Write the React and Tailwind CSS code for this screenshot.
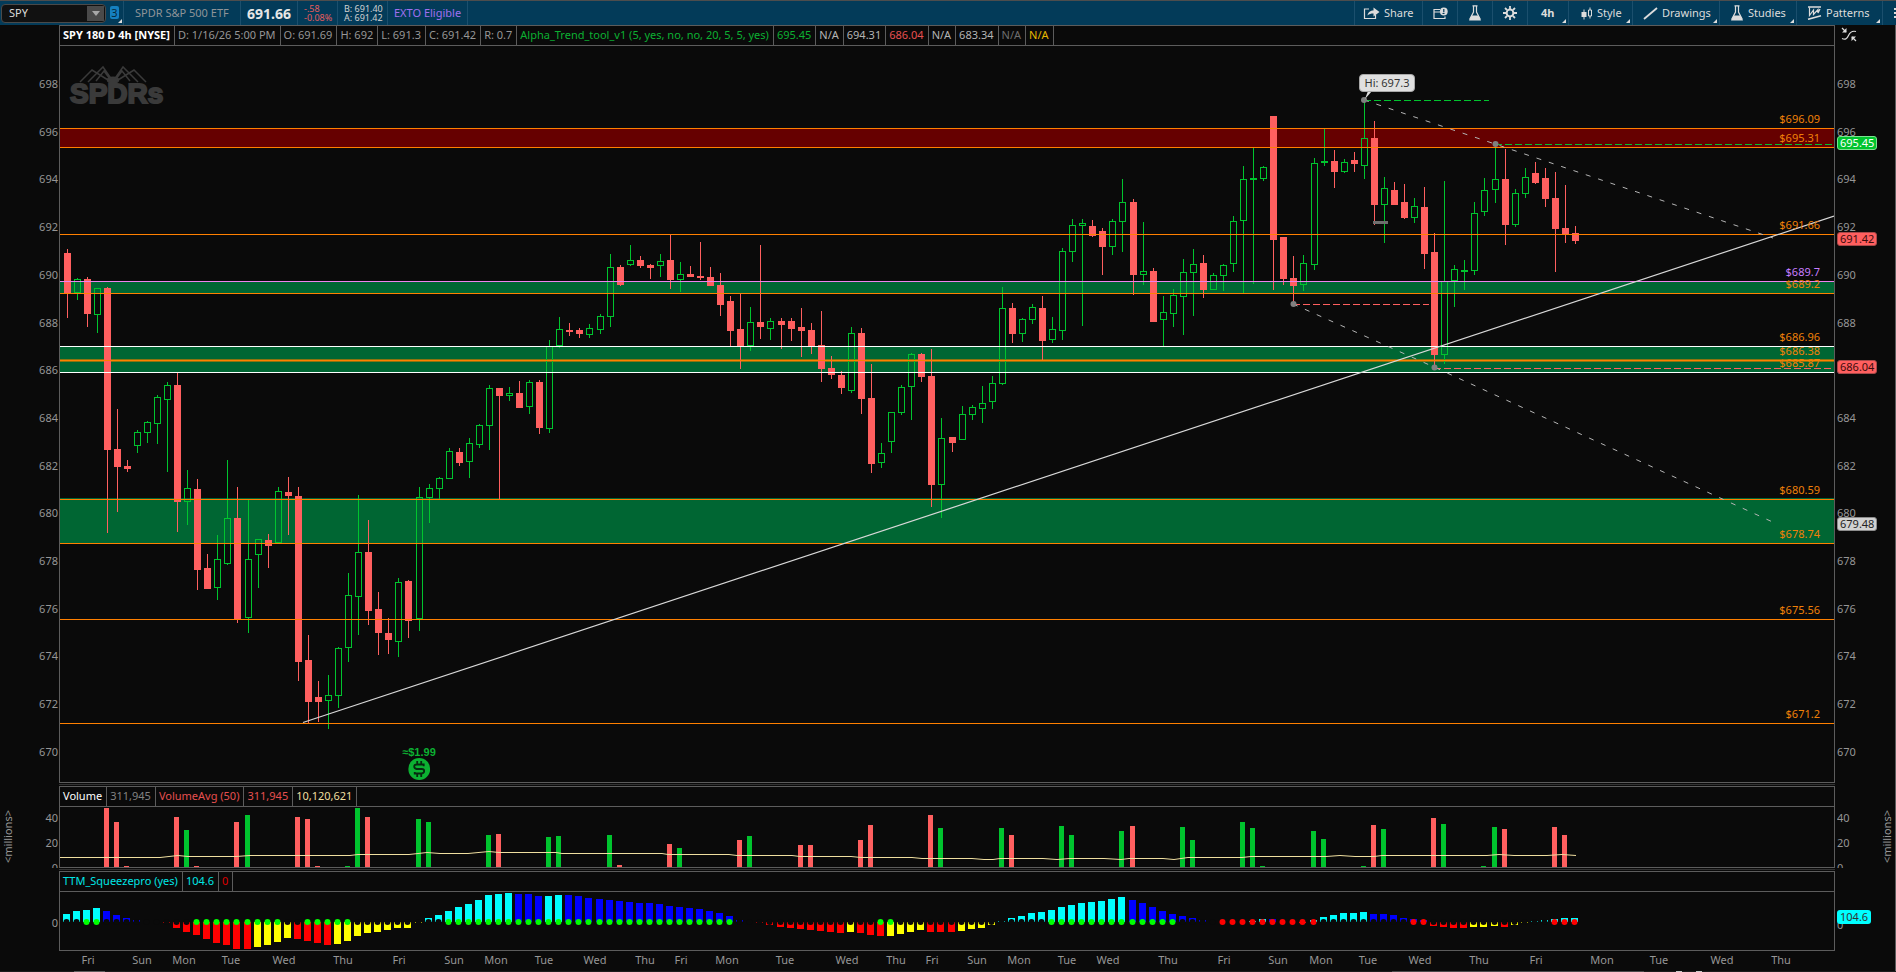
import React from 'react';

const UP = '#00c42e';
const DOWN = '#ff5f5f';

// Plot geometry
const LEFT = 60;
const WIDTH = 1774;
const barX = (i) => Math.floor(67.03 + i * 10.0565);

// [direction, high, body top, body bottom, low]
const candles = [
  ['d', 249, 253, 293, 318], ['u', 278, 279, 293, 300], ['d', 277, 279, 314, 327], ['u', 288, 288, 315, 333],
  ['d', 287, 288, 450, 533], ['d', 409, 449, 467, 512], ['d', 460, 466, 469, 472], ['u', 430, 432, 446, 453],
  ['u', 421, 422, 433, 443], ['u', 395, 397, 424, 444], ['u', 382, 385, 400, 472], ['d', 372, 385, 502, 532],
  ['u', 470, 488, 502, 525], ['d', 479, 489, 570, 590], ['d', 554, 568, 589, 589], ['u', 535, 559, 588, 600],
  ['u', 460, 518, 564, 565], ['d', 487, 518, 619, 623], ['u', 500, 559, 618, 633], ['u', 539, 539, 555, 588],
  ['d', 534, 540, 546, 568], ['u', 487, 491, 543, 543], ['d', 477, 492, 496, 535], ['d', 487, 496, 662, 681],
  ['d', 635, 660, 702, 723], ['d', 681, 697, 702, 722], ['u', 675, 695, 701, 729], ['u', 647, 648, 696, 708],
  ['u', 573, 595, 648, 662], ['u', 495, 552, 597, 635], ['d', 520, 552, 611, 625], ['d', 592, 609, 633, 655],
  ['d', 618, 633, 640, 654], ['u', 578, 582, 642, 657], ['d', 580, 581, 621, 638], ['u', 487, 497, 619, 631],
  ['u', 484, 488, 498, 523], ['u', 477, 478, 489, 500], ['u', 448, 451, 479, 479], ['d', 448, 452, 463, 466],
  ['u', 438, 443, 462, 478], ['u', 424, 425, 445, 448], ['u', 385, 388, 426, 450], ['d', 388, 388, 396, 499],
  ['u', 387, 393, 396, 401], ['d', 381, 393, 408, 408], ['u', 380, 382, 407, 414], ['d', 380, 382, 428, 434],
  ['u', 340, 346, 429, 433], ['u', 317, 329, 346, 348], ['d', 323, 330, 332, 336], ['d', 328, 330, 334, 338],
  ['u', 324, 328, 335, 338], ['u', 314, 316, 330, 334], ['u', 254, 267, 317, 327], ['d', 265, 267, 285, 286],
  ['u', 245, 260, 265, 266], ['d', 256, 260, 266, 268], ['d', 264, 265, 268, 279], ['u', 254, 261, 266, 277],
  ['d', 235, 260, 280, 289], ['u', 262, 274, 280, 292], ['d', 266, 274, 277, 277], ['d', 242, 276, 278, 280],
  ['d', 267, 277, 286, 286], ['d', 273, 285, 305, 316], ['d', 296, 301, 331, 346], ['d', 293, 329, 346, 369],
  ['u', 307, 322, 346, 351], ['d', 245, 322, 327, 339], ['u', 318, 321, 329, 340], ['d', 318, 321, 325, 349],
  ['d', 318, 321, 329, 341], ['d', 308, 327, 331, 357], ['d', 323, 330, 346, 354], ['d', 311, 345, 369, 382],
  ['d', 356, 368, 375, 379], ['d', 371, 375, 388, 394], ['u', 327, 333, 391, 393], ['d', 328, 333, 399, 414],
  ['d', 364, 398, 464, 473], ['u', 443, 453, 463, 468], ['u', 412, 412, 442, 453], ['u', 385, 387, 413, 415],
  ['u', 353, 354, 387, 420], ['d', 353, 354, 377, 382], ['d', 349, 376, 485, 507], ['u', 418, 438, 485, 518],
  ['d', 437, 437, 443, 452], ['u', 406, 414, 440, 440], ['u', 405, 407, 415, 420], ['u', 386, 403, 409, 423],
  ['u', 376, 383, 402, 409], ['u', 287, 308, 384, 385], ['d', 303, 308, 334, 343], ['u', 318, 319, 334, 342],
  ['u', 304, 307, 320, 324], ['d', 296, 308, 341, 360], ['u', 317, 329, 340, 343], ['u', 248, 251, 331, 340],
  ['u', 219, 225, 252, 262], ['u', 219, 223, 226, 326], ['d', 220, 226, 236, 237], ['d', 228, 231, 247, 275],
  ['u', 219, 221, 247, 255], ['u', 179, 202, 222, 252], ['d', 199, 202, 275, 295], ['u', 222, 271, 275, 285],
  ['d', 268, 271, 322, 322], ['u', 296, 312, 320, 346], ['u', 289, 295, 314, 327], ['u', 259, 272, 297, 335],
  ['u', 249, 264, 273, 316], ['d', 255, 263, 290, 298], ['u', 273, 275, 290, 290], ['u', 264, 265, 276, 291],
  ['u', 216, 221, 264, 272], ['u', 166, 179, 221, 293], ['u', 148, 178, 180, 284], ['u', 166, 167, 179, 181],
  ['d', 116, 116, 240, 290], ['d', 237, 237, 279, 285], ['d', 256, 278, 286, 304], ['u', 255, 263, 285, 291],
  ['u', 158, 163, 265, 270], ['u', 129, 161, 163, 166], ['d', 150, 161, 172, 188], ['u', 159, 162, 172, 173],
  ['d', 152, 160, 164, 172], ['u', 101, 138, 166, 179], ['d', 121, 138, 205, 225], ['u', 177, 188, 205, 243],
  ['d', 182, 190, 205, 205], ['d', 184, 202, 218, 219], ['u', 198, 206, 218, 223], ['d', 187, 207, 254, 269],
  ['d', 233, 252, 355, 367], ['u', 181, 281, 355, 364], ['u', 265, 269, 281, 307], ['u', 260, 270, 272, 290],
  ['u', 202, 213, 271, 275], ['u', 178, 190, 212, 216], ['u', 145, 179, 190, 203], ['d', 149, 179, 225, 245],
  ['u', 189, 193, 225, 227], ['u', 168, 177, 194, 198], ['d', 162, 173, 183, 184], ['d', 168, 178, 199, 207],
  ['d', 172, 198, 229, 272], ['d', 185, 228, 234, 243], ['d', 226, 233, 241, 244],
];

// [bar index, direction, height]
const volume = [
  [4, 'd', 59], [5, 'd', 45], [6, 'd', 1], [11, 'd', 50], [12, 'u', 37], [13, 'd', 1], [17, 'd', 45], [18, 'u', 52],
  [23, 'd', 50], [24, 'd', 48], [25, 'd', 1], [28, 'u', 1], [29, 'u', 59], [30, 'd', 50], [35, 'u', 48], [36, 'u', 45],
  [42, 'u', 32], [43, 'd', 33], [48, 'u', 30], [49, 'u', 31], [54, 'u', 32], [55, 'd', 2], [60, 'd', 23], [61, 'u', 19],
  [67, 'd', 27], [68, 'u', 31], [73, 'd', 22], [74, 'd', 22], [79, 'd', 27], [80, 'd', 42], [86, 'd', 52], [87, 'u', 39],
  [93, 'u', 39], [94, 'd', 32], [99, 'u', 41], [100, 'u', 32], [105, 'u', 36], [106, 'd', 41], [111, 'u', 40], [112, 'u', 27],
  [117, 'u', 45], [118, 'u', 39], [119, 'u', 1], [124, 'u', 36], [125, 'u', 28], [129, 'u', 1], [130, 'd', 42], [131, 'u', 38],
  [136, 'd', 49], [137, 'u', 43], [141, 'u', 1], [142, 'u', 40], [143, 'd', 38], [148, 'd', 40], [149, 'd', 32],
];

const volumeAvg = [
  [60, 857], [160, 857], [178, 855], [188, 856], [236, 856], [250, 855], [350, 855], [358, 854], [409, 854], [427, 852],
  [440, 853], [468, 853], [489, 851], [499, 852], [556, 852], [562, 853], [662, 853], [668, 854], [729, 854], [737, 855],
  [792, 855], [800, 856], [851, 856], [861, 857], [912, 857], [922, 858], [972, 858], [984, 859], [993, 859], [1000, 858],
  [1043, 858], [1057, 859], [1070, 858], [1104, 858], [1121, 859], [1129, 858], [1163, 858], [1174, 859], [1188, 857],
  [1242, 857], [1251, 856], [1326, 856], [1340, 855], [1355, 856], [1374, 856], [1382, 855], [1487, 855], [1499, 854],
  [1514, 855], [1547, 855], [1562, 854], [1576, 855],
];

// Momentum histogram: c = rising up, b = falling up, r = falling down, y = rising down
const momentumColors = { c: '#00ffff', b: '#0000ff', r: '#ff0000', y: '#ffff00' };
const momentum = [
  ['c', 8], ['c', 11], ['c', 12], ['c', 14], ['b', 11], ['b', 7], ['b', 4], ['b', 2], ['b', 0], ['r', 0],
  ['r', -1], ['r', -6], ['r', -10], ['r', -13], ['r', -17], ['r', -21], ['r', -23], ['r', -27], ['r', -27], ['y', -25],
  ['y', -23], ['y', -20], ['y', -16], ['r', -17], ['r', -19], ['r', -21], ['r', -23], ['y', -22], ['y', -19], ['y', -14],
  ['y', -11], ['y', -10], ['y', -8], ['y', -6], ['y', -6], ['y', -1], ['c', 4], ['c', 7], ['c', 11], ['c', 15],
  ['c', 18], ['c', 22], ['c', 27], ['c', 28], ['c', 29], ['b', 28], ['b', 28], ['b', 26], ['c', 26], ['c', 27],
  ['b', 27], ['b', 26], ['b', 24], ['b', 23], ['b', 22], ['b', 21], ['b', 20], ['b', 19], ['b', 19], ['b', 18],
  ['b', 16], ['b', 15], ['b', 14], ['b', 13], ['b', 11], ['b', 9], ['b', 6], ['b', 2], ['b', 0], ['r', -1],
  ['r', -3], ['r', -5], ['r', -6], ['r', -7], ['r', -8], ['r', -9], ['r', -10], ['r', -11], ['y', -10], ['r', -11],
  ['r', -13], ['r', -14], ['y', -14], ['y', -12], ['y', -10], ['y', -8], ['r', -10], ['r', -10], ['r', -10], ['y', -9],
  ['y', -7], ['y', -6], ['y', -3], ['c', 1], ['c', 4], ['c', 6], ['c', 9], ['c', 10], ['c', 12], ['c', 15],
  ['c', 17], ['c', 19], ['c', 20], ['c', 21], ['c', 23], ['c', 25], ['b', 22], ['b', 19], ['b', 15], ['b', 11],
  ['b', 8], ['b', 6], ['b', 4], ['b', 2], ['b', 0], ['r', 0], ['r', 0], ['r', 0], ['c', 1], ['c', 3],
  ['b', 3], ['b', 0], ['r', 0], ['r', -1], ['c', 2], ['c', 5], ['c', 7], ['c', 9], ['c', 9], ['c', 10],
  ['b', 8], ['b', 8], ['b', 7], ['b', 4], ['b', 3], ['b', 2], ['r', -4], ['r', -5], ['r', -6], ['r', -6],
  ['y', -5], ['y', -5], ['y', -4], ['r', -5], ['y', -3], ['y', -1], ['c', 1], ['c', 2], ['c', 3], ['c', 4],
  ['c', 4],
];

const between = (i, ranges) => ranges.some(([a, b]) => i >= a && i <= b);

function squeezeColor(i) {
  if (between(i, [[2, 3], [13, 21], [24, 28], [38, 66], [81, 82], [98, 110]])) return '#00ff00';
  if (between(i, [[115, 124], [134, 135], [148, 150]])) return '#ff0000';
  return '#0a0a0a';
}

const levels = [
  [128, '#ff8000'], [147, '#ff8000'], [234, '#ff8000'], [281, '#ee82ee'], [293, '#ff8000'], [346, '#ffffff'],
  [360, '#ff8000'], [372, '#ffffff'], [499, '#ff8000'], [543, '#ff8000'], [619, '#ff8000'], [723, '#ff8000'],
];

const levelLabels = [
  ['$696.09', 119], ['$695.31', 138], ['$691.66', 225], ['$689.7', 272, 'text-[#c77dff]'], ['$689.2', 284],
  ['$686.96', 337], ['$686.38', 351], ['$685.87', 363], ['$680.59', 490], ['$678.74', 534], ['$675.56', 610],
  ['$671.2', 714],
];

const priceBadges = [
  ['695.45', 143, 'bg-[#00c42e] text-white border-[#7be38f]'],
  ['691.42', 239, 'bg-[#ff5f5f] text-[#3c0c0c] border-[#a84848]'],
  ['686.04', 367, 'bg-[#ff5f5f] text-[#3c0c0c] border-[#a84848]'],
  ['679.48', 524, 'bg-[#d2d2d2] text-[#222222] border-[#8c8c8c]'],
];

const prices = [698, 696, 694, 692, 690, 688, 686, 684, 682, 680, 678, 676, 674, 672, 670];

const days = [
  ['Fri', 88], ['Sun', 142], ['Mon', 184], ['Tue', 231], ['Wed', 284], ['Thu', 343], ['Fri', 399], ['Sun', 454],
  ['Mon', 496], ['Tue', 544], ['Wed', 595], ['Thu', 645], ['Fri', 681], ['Mon', 727], ['Tue', 785], ['Wed', 847],
  ['Thu', 896], ['Fri', 932], ['Sun', 977], ['Mon', 1019], ['Tue', 1067], ['Wed', 1108], ['Thu', 1168], ['Fri', 1224],
  ['Sun', 1278], ['Mon', 1321], ['Tue', 1368], ['Wed', 1420], ['Thu', 1479], ['Fri', 1536], ['Mon', 1602],
  ['Tue', 1659], ['Wed', 1722], ['Thu', 1781],
];

const pct = (x) => `${((x - LEFT) / WIDTH) * 100}%`;

function Flask() {
  return (
    <svg width="14" height="16" viewBox="0 0 14 16" fill="none" stroke="#dcdcdc">
      <path d="M4.500 .8h5M5.500 1v6L1.600 14.500M8.500 1v6l3.900 7.500" strokeWidth="1.200" />
      <path d="M3.600 10.500h6.800l2.600 4.900H1z" fill="#dcdcdc" stroke="none" />
    </svg>
  );
}

function ShareIcon() {
  return (
    <svg width="17" height="14" viewBox="0 0 17 14" fill="none" stroke="#dcdcdc" strokeWidth="1.200">
      <path d="M6 3H1.500v9.500h11V9" />
      <path d="M4.500 9.500C5 6 7.500 4.500 10.500 4.500V1.500L16.500 6l-6 4.500V7.500C8 7.500 6 8 4.500 9.500z" fill="#dcdcdc" stroke="none" />
    </svg>
  );
}

function AlertWindowIcon() {
  return (
    <svg width="15" height="13" viewBox="0 0 15 13" fill="none" stroke="#dcdcdc" strokeWidth="1.200">
      <path d="M7 2.500H1v9h11V9.500M1 5h6" />
      <circle cx="10.800" cy="4.500" r="3.900" fill="#dcdcdc" stroke="none" />
      <path d="M10.800 2v3.200M9.500 6.500h2" stroke="#033b59" />
    </svg>
  );
}

function GearIcon() {
  return (
    <svg width="14" height="14" viewBox="0 0 14 14" fill="none" stroke="#dcdcdc">
      <circle cx="7" cy="7" r="3.400" strokeWidth="2" />
      <path d="M7 0v3M7 11v3M0 7h3M11 7h3M2 2l2.200 2.200M9.800 9.800L12 12M12 2L9.800 4.200M4.200 9.800L2 12" strokeWidth="1.800" />
    </svg>
  );
}

function CandlesIcon() {
  return (
    <svg width="12" height="13" viewBox="0 0 12 13" fill="none" stroke="#dcdcdc">
      <path d="M3 2.500v10M9 .5v2.500M9 9v2.500" />
      <path d="M.5 5h5v5h-5z" fill="#dcdcdc" stroke="none" />
      <path d="M7.500 3h3v6h-3z" />
    </svg>
  );
}

function LineIcon() {
  return (
    <svg width="15" height="13" viewBox="0 0 15 13" stroke="#dcdcdc" strokeWidth="1.800">
      <path d="M1 12L14 1" />
    </svg>
  );
}

function PatternIcon() {
  return (
    <svg width="15" height="14" viewBox="0 0 15 14" fill="none" stroke="#dcdcdc" strokeWidth="1.200">
      <path d="M1 1h13M1 13.300l13-3.600" strokeWidth="1.600" />
      <path d="M2.500 1.500v8l4-5.500v4.500L11 3.500V7l2-4" />
    </svg>
  );
}

function Corner() {
  return <span className="absolute bottom-[2px] right-[2px] border-b-4 border-l-4 border-b-[#dcdcdc] border-l-transparent" />;
}

function ToolButton({ className, label, corner, children }) {
  return (
    <button
      aria-label={label}
      className={`relative flex h-full items-center border-l border-[#1b4f6d] text-[11px] text-[#dcdcdc] ${className}`}
    >
      {children}
      {corner && <Corner />}
    </button>
  );
}

function Toolbar() {
  return (
    <header className="flex h-[25px] items-stretch border-t border-[#4d4d4d] bg-[#033b59]">
      <div className="flex w-[123px] items-center gap-1 pl-px">
        <div className="flex h-[19px] w-[105px] items-center rounded-sm border border-[#4a4a4a] bg-[#111111] pr-px">
          <input
            aria-label="Symbol"
            defaultValue="SPY"
            className="w-0 flex-1 bg-transparent pl-[7px] text-[11px] leading-4 text-[#dcdcdc] outline-none"
          />
          <button aria-label="Symbol list" className="flex h-[15px] w-[17px] items-center justify-center bg-[#4a4a4a]">
            <svg width="8" height="5" viewBox="0 0 8 5">
              <path d="M0 0h8L4 5z" fill="#a8a8a8" />
            </svg>
          </button>
        </div>
        <button aria-label="Link group" className="relative mb-px h-[13px] w-[9px] rounded-xs bg-[#1580c0] text-[11px] leading-[13px] text-[#06283c]">
          3
          <span className="absolute -right-[3px] -bottom-[4px] border-b-4 border-l-4 border-b-[#dcdcdc] border-l-transparent" />
        </button>
      </div>
      <div className="flex w-[117px] items-center border-l border-[#1b4f6d] pl-[11px] text-[11px] whitespace-nowrap text-[#8f9498]">
        SPDR S&amp;P 500 ETF
      </div>
      <div className="flex w-[57px] items-center border-l border-[#1b4f6d] pl-[6px] text-[14px] font-bold text-[#e6e6e6]">691.66</div>
      <div className="flex w-[40px] flex-col justify-center border-l border-[#1b4f6d] pl-[6px] text-[9px] leading-[9px] text-[#e65c5c]">
        <span>-.58</span>
        <span>-0.08%</span>
      </div>
      <div className="flex w-[50px] flex-col justify-center border-l border-[#1b4f6d] pl-[6px] text-[9px] leading-[9px] whitespace-nowrap text-[#d0d0d0]">
        <span>B: 691.40</span>
        <span>A: 691.42</span>
      </div>
      <div className="flex w-[80px] items-center border-l border-[#1b4f6d] pl-[6px] text-[11px] whitespace-nowrap text-[#a070f0]">
        EXTO Eligible
      </div>
      <div className="flex-1 border-l border-[#1b4f6d]" />
      <ToolButton className="w-[68px] gap-[4px] pl-[8px]">
        <ShareIcon />
        Share
      </ToolButton>
      <ToolButton className="w-[35px] justify-center" label="Alerts"><AlertWindowIcon /></ToolButton>
      <ToolButton className="w-[35px] justify-center" label="Edit studies"><Flask /></ToolButton>
      <ToolButton className="w-[35px] justify-center" label="Settings"><GearIcon /></ToolButton>
      <ToolButton className="w-[41px] pl-[13px] font-bold" corner>4h</ToolButton>
      <ToolButton className="w-[64px] gap-[4px] pl-[12px]" corner>
        <CandlesIcon />
        Style
      </ToolButton>
      <ToolButton className="w-[87px] gap-[4px] pl-[10px]" corner>
        <LineIcon />
        Drawings
      </ToolButton>
      <ToolButton className="w-[77px] gap-[4px] pl-[10px]" corner>
        <Flask />
        Studies
      </ToolButton>
      <ToolButton className="w-[86px] gap-[4px] pl-[10px]" corner>
        <PatternIcon />
        Patterns
      </ToolButton>
      <ToolButton className="w-[14px] justify-end overflow-hidden" label="More">
        <span className="border-r-2 border-dotted border-[#dcdcdc] py-[5px]" />
      </ToolButton>
    </header>
  );
}

function Cell({ className, children }) {
  return <span className={`flex items-center border-r border-[#5c5c5c] pr-[4px] pl-[3px] whitespace-nowrap ${className}`}>{children}</span>;
}

function Pane({ left, right, header, children }) {
  return (
    <section className="flex">
      <div className="relative w-[59px] shrink-0 pr-px text-right">{left}</div>
      <div className="min-w-0 flex-1 border border-[#5c5c5c]">
        <div className="flex h-[20px] items-stretch overflow-hidden border-b border-[#5c5c5c] text-[11px]">{header}</div>
        <div className="relative">{children}</div>
      </div>
      <div className="relative w-[61px] shrink-0 border-r border-[#5c5c5c] pl-[2px]">{right}</div>
    </section>
  );
}

function Splitter() {
  return (
    <div className="flex h-[3px] items-center border-r border-[#5c5c5c] pr-[60px] pl-[59px]">
      <div className="h-px flex-1 bg-[#333333]" />
    </div>
  );
}

function PriceAxis() {
  return (
    <div className="flex h-[735px] flex-col justify-between pt-[51px] text-[11px] leading-4 text-[#969696]">
      {prices.map((p) => (
        <span key={p}>{p}</span>
      ))}
    </div>
  );
}

function Candle({ i, data }) {
  const [dir, high, top, bottom, low] = data;
  const x = barX(i);
  const color = dir === 'u' ? UP : DOWN;
  const hollow = dir === 'u' && bottom - top > 2;
  return (
    <g fill={color}>
      <rect x={x} y={high} width="1" height={top - high} />
      <rect x={x} y={bottom} width="1" height={low - bottom} />
      {hollow ? (
        <rect x={x - 2.5} y={top + 0.5} width="6" height={bottom - top - 1} fill="none" stroke={color} />
      ) : (
        <rect x={x - 3} y={top} width="7" height={bottom - top} />
      )}
    </g>
  );
}

function PriceChart() {
  return (
    <>
      <svg className="block h-[736px] w-full" viewBox="60 46 1774 736" preserveAspectRatio="none">
        <g shapeRendering="crispEdges">
          <rect x="60" y="128" width="1774" height="20" fill="#660000" />
          <rect x="60" y="281" width="1774" height="13" fill="#006633" />
          <rect x="60" y="346" width="1774" height="27" fill="#006633" />
          <rect x="60" y="498" width="1774" height="45" fill="#006633" />
          <rect x="60" y="359" width="1774" height="3" fill="#8a7310" />
          {candles.map((c, i) => (
            <Candle key={i} i={i} data={c} />
          ))}
          {levels.map(([y, color]) => (
            <rect key={y} x="60" y={y} width="1774" height="1" fill={color} />
          ))}
          <rect x="1373" y="221" width="15" height="3" fill="#6e6e6e" />
          <g strokeDasharray="7 3" fill="none">
            <path d="M1364 100.500H1489M1495 144.500H1832" stroke={UP} />
            <path d="M1293 304.500H1429M1434 368.500H1832" stroke={DOWN} />
          </g>
        </g>
        <path d="M303 722.500L1834 216" stroke="#d8d8d8" strokeWidth="1.200" />
        <g stroke="#b4b4b4" strokeDasharray="5 8" fill="none">
          <path d="M1364 100L1495 144L1773 238" />
          <path d="M1293 304L1434 367L1777 524" />
        </g>
        <g fill="#808080">
          <circle cx="1364" cy="100" r="3" />
          <circle cx="1495.500" cy="144" r="3" />
          <circle cx="1293.500" cy="304" r="3" />
          <circle cx="1434.500" cy="367.500" r="3" />
        </g>
        <path d="M1365 99L1368 91h4z" fill="#e0e0e0" />
      </svg>

      {/* Issuer watermark */}
      <div className="absolute top-[19px] left-[10px] text-[#3a3a3a]">
        <svg width="98" height="20" viewBox="0 0 98 20" fill="none" stroke="currentColor" strokeWidth="1.500">
          <path d="M10 17L22 5l16 10M18 17L33 2l9 13M26 16l8-10 6 8" />
          <path d="M76 17L64 5 48 15M68 17L53 2l-9 13M60 16l-8-10-6 8" />
          <ellipse cx="43" cy="15" rx="5.500" ry="2.800" fill="currentColor" />
        </svg>
        <div className="-mt-[3px] font-['Liberation_Sans',sans-serif] text-[28px] leading-[24px] font-bold [-webkit-text-stroke:2px_#3a3a3a]">SPDRs</div>
      </div>

      {/* High marker */}
      <div
        className="absolute top-[28px] flex h-[18px] w-[56px] items-center justify-center rounded-[4px] border border-[#a8a8a8] bg-[#e0e0e0] text-[11px] text-[#333333]"
        style={{ left: pct(1359) }}
      >
        Hi: 697.3
      </div>

      {/* Dividend marker */}
      <div
        className="absolute top-[701px] flex -translate-x-1/2 flex-col items-center font-['Liberation_Sans',sans-serif] text-[11px] leading-[11px] font-bold text-[#0cb032]"
        style={{ left: pct(419) }}
      >
        ≈$1.99
        <svg width="22" height="22" viewBox="0 0 22 22" fill="none">
          <circle cx="11" cy="11" r="11" fill="#0cb032" />
          <path
            d="M15.500 8.200V6.500H8.500Q6 6.500 6 8.500T8.500 11h5Q16 11 16 13t-2.500 2.500H6.500V14M9 3v3M13 3v3M9 16v3M13 16v3"
            stroke="#06280f"
            strokeWidth="1.800"
          />
        </svg>
      </div>

      {levelLabels.map(([text, y, tone]) => (
        <span
          key={text}
          className={`absolute right-[14px] text-[11px] leading-4 ${tone || 'text-[#f08008]'}`}
          style={{ top: y - 54 }}
        >
          {text}
        </span>
      ))}
    </>
  );
}

function PriceAxisRight() {
  return (
    <>
      <PriceAxis />
      <svg className="absolute top-[2px] left-[6px]" width="16" height="15" viewBox="0 0 16 15" fill="none" stroke="#dcdcdc" strokeWidth="1.200">
        <path d="M1 1l4 4M1 11.500c3 1.500 5 .5 6.500-3S11 3.500 15 4.500M15 14l-4-4" />
        <path d="M5.500 1v4.500H1zM10.500 14V9.500H15z" fill="#dcdcdc" stroke="none" />
      </svg>
      {priceBadges.map(([text, y, tone]) => (
        <span
          key={text}
          className={`absolute left-[2px] h-[14px] rounded-[3px] border px-[2px] text-[11px] leading-[12px] ${tone}`}
          style={{ top: y - 32 }}
        >
          {text}
        </span>
      ))}
    </>
  );
}

function VolumeAxis({ side }) {
  return (
    <>
      <div className="h-[82px] overflow-hidden pt-[19px] text-[11px] leading-[25px] text-[#969696]">
        <div>40</div>
        <div>20</div>
        <div>0</div>
      </div>
      <span
        className={`absolute top-[23px] h-[56px] rotate-180 text-center text-[11px] leading-4 text-[#969696] [writing-mode:vertical-rl] ${
          side === 'left' ? 'left-0' : 'right-0'
        }`}
      >
        &lt;millions&gt;
      </span>
    </>
  );
}

function VolumeChart() {
  return (
    <svg className="block h-[60px] w-full" viewBox="60 807 1774 60" preserveAspectRatio="none">
      <g shapeRendering="crispEdges">
        {volume.map(([i, dir, h]) => (
          <rect key={i} x={barX(i) - 3} y={867 - h} width="5" height={h} fill={dir === 'u' ? UP : DOWN} />
        ))}
      </g>
      <polyline points={volumeAvg.map(([x, y]) => `${x},${y + 0.5}`).join(' ')} fill="none" stroke="#f0dfa0" />
    </svg>
  );
}

function SqueezeChart() {
  return (
    <svg className="block h-[58px] w-full" viewBox="60 892 1774 58" preserveAspectRatio="none">
      <g shapeRendering="crispEdges">
        {momentum.map(([key, v], i) => (
          <rect
            key={i}
            x={barX(i) - 4}
            y={v > 0 ? 922 - v : 922}
            width="7"
            height={Math.abs(v)}
            fill={momentumColors[key]}
          />
        ))}
      </g>
      {momentum.map((_, i) => (
        <circle key={i} cx={barX(i) - 0.5} cy="922" r="3" fill={squeezeColor(i)} />
      ))}
    </svg>
  );
}

export default function App() {
  return (
    <div className="min-h-screen overflow-hidden bg-[#0a0a0a] font-['Noto_Sans','Open_Sans',sans-serif]">
      <Toolbar />

      {/* Price */}
      <Pane
        left={<PriceAxis />}
        right={<PriceAxisRight />}
        header={
          <>
            <Cell className="font-bold text-white">SPY 180 D 4h [NYSE]</Cell>
            <Cell className="text-[#969696]">D: 1/16/26 5:00 PM</Cell>
            <Cell className="text-[#969696]">O: 691.69</Cell>
            <Cell className="text-[#969696]">H: 692</Cell>
            <Cell className="text-[#969696]">L: 691.3</Cell>
            <Cell className="text-[#969696]">C: 691.42</Cell>
            <Cell className="text-[#969696]">R: 0.7</Cell>
            <Cell className="text-[#0cb032]">Alpha_Trend_tool_v1 (5, yes, no, no, 20, 5, 5, yes)</Cell>
            <Cell className="text-[#0cb032]">695.45</Cell>
            <Cell className="text-[#b4b4b4]">N/A</Cell>
            <Cell className="text-[#b4b4b4]">694.31</Cell>
            <Cell className="text-[#e65050]">686.04</Cell>
            <Cell className="text-[#b4b4b4]">N/A</Cell>
            <Cell className="text-[#b4b4b4]">683.34</Cell>
            <Cell className="text-[#6e6e6e]">N/A</Cell>
            <Cell className="text-[#e6b800]">N/A</Cell>
          </>
        }
      >
        <PriceChart />
      </Pane>
      <Splitter />

      {/* Volume */}
      <Pane
        left={<VolumeAxis side="left" />}
        right={<VolumeAxis side="right" />}
        header={
          <>
            <Cell className="text-white">Volume</Cell>
            <Cell className="text-[#828282]">311,945</Cell>
            <Cell className="text-[#e65050]">VolumeAvg (50)</Cell>
            <Cell className="text-[#e65050]">311,945</Cell>
            <Cell className="text-[#f0dfa0]">10,120,621</Cell>
          </>
        }
      >
        <VolumeChart />
      </Pane>
      <Splitter />

      {/* Squeeze */}
      <Pane
        left={<div className="pt-[44px] text-[11px] leading-4 text-[#969696]">0</div>}
        right={
          <>
            <div className="pt-[46px] text-[11px] leading-4 text-[#969696]">0</div>
            <span className="absolute top-[39px] left-[2px] h-[14px] rounded-[3px] bg-[#00ffff] px-[3px] text-[11px] leading-[14px] text-[#333333]">
              104.6
            </span>
          </>
        }
        header={
          <>
            <Cell className="text-[#00e6e6]">TTM_Squeezepro (yes)</Cell>
            <Cell className="text-[#00e6e6]">104.6</Cell>
            <Cell className="text-[#dc0000]">0</Cell>
          </>
        }
      >
        <SqueezeChart />
      </Pane>

      {/* Time axis */}
      <div className="flex h-[20px] border-r border-[#5c5c5c] pr-[61px] pl-[60px]">
        <div className="relative flex-1 text-[11px] leading-[18px] text-[#969696]">
          {days.map(([day, x]) => (
            <span key={x} className="absolute top-0 -translate-x-1/2" style={{ left: pct(x) }}>
              {day}
            </span>
          ))}
        </div>
      </div>
      <div className="flex h-px bg-[#1c1c1c]">
        <span className="ml-[74px] w-[31px] bg-[#5c5c5c]" />
        <span className="ml-auto w-[252px] bg-[#4a4a4a]" />
        <span className="ml-[32px] w-[6px] bg-[#c8c8c8]" />
        <span className="mr-[194px] ml-[14px] w-[6px] bg-[#c8c8c8]" />
      </div>
    </div>
  );
}
